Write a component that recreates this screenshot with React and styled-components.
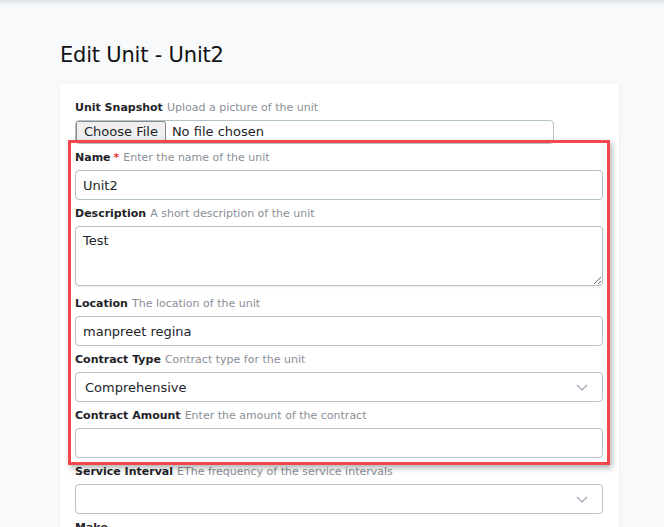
import styled, { createGlobalStyle } from "styled-components";

const GlobalStyle = createGlobalStyle`
  body {
    margin: 0;
    background: #f8f9fb;
    font-family: "DejaVu Sans", "Noto Sans", sans-serif;
    color: #212529;
  }
`;

const TopShade = styled.div`
  height: 5px;
  background: linear-gradient(#dde1e6, #f8f9fb);
`;

const Main = styled.main`
  padding: 36px 45px 0 60px;
`;

const Title = styled.h1`
  margin: 0 0 15px;
  font-family: "DejaVu Sans", sans-serif;
  font-size: 21px;
  font-weight: 400;
  line-height: 28px;
  letter-spacing: -0.2px;
  color: #111;
`;

const Card = styled.section`
  width: 528px;
  background: #fff;
  padding: 16px 16px 20px 15px;
  box-shadow: 0 0 4px rgba(0, 0, 0, 0.05);
`;

const Field = styled.div`
  display: flex;
  flex-direction: column;
  margin-bottom: ${(p) => p.$gap ?? 6}px;
`;

const Label = styled.label`
  font-size: 11px;
  line-height: 15px;
  margin-bottom: 5px;
  font-weight: 700;
  color: #1f2328;
  white-space: nowrap;
`;

const Required = styled.span`
  color: #e53935;
  margin-left: 3px;
`;

const Hint = styled.span`
  font-weight: 400;
  color: #8a8f96;
  margin-left: 4px;
`;

const TextInput = styled.input`
  box-sizing: border-box;
  height: 30px;
  width: 100%;
  border: 1px solid #b3c1ca;
  border-radius: 4px;
  padding: 0 7px;
  font: inherit;
  font-size: 13px;
  color: #212529;
  background: #fff;
`;

const TextArea = styled.textarea`
  display: block;
  box-sizing: border-box;
  height: 60px;
  width: 100%;
  margin-bottom: 4px;
  border: 1px solid #b3c1ca;
  border-radius: 4px;
  padding: 6px 7px;
  font: inherit;
  font-size: 13px;
  color: #212529;
  resize: vertical;
  box-shadow: 0 1px 3px rgba(0, 0, 0, 0.08);
`;

const FileInput = styled.input`
  box-sizing: border-box;
  display: block;
  width: 479px;
  height: 24px;
  border: 1px solid #b3c1ca;
  border-radius: 4px;
  font: inherit;
  font-size: 13px;
  color: #212529;

  &::file-selector-button {
    font: inherit;
    height: 21px;
    margin: 0 6px 0 0;
    padding: 0 7px;
    border: 1px solid #8a8a8a;
    border-radius: 2px;
    background: #efefef;
    color: #212529;
  }
`;

const SelectWrap = styled.div`
  position: relative;
`;

const Select = styled.select`
  box-sizing: border-box;
  appearance: none;
  height: 30px;
  width: 100%;
  border: 1px solid #b3c1ca;
  border-radius: 4px;
  padding: 0 9px;
  font: inherit;
  font-size: 13px;
  color: #212529;
  background: #fff;
`;

const Chevron = styled.svg`
  position: absolute;
  right: 15px;
  top: 12px;
  pointer-events: none;
`;

const Highlight = styled.div`
  position: relative;

  &::after {
    content: "";
    position: absolute;
    inset: -10px -7px -7px -7px;
    border: 3px solid #f2474b;
    box-shadow: 2px 3px 6px rgba(0, 0, 0, 0.3);
    pointer-events: none;
  }
`;

const SelectField = ({ value, options }) => (
  <SelectWrap>
    <Select defaultValue={value}>
      {options.map((o) => (
        <option key={o} value={o}>
          {o}
        </option>
      ))}
    </Select>
    <Chevron width="12" height="7" viewBox="0 0 12 7">
      <path d="M1 1l5 5 5-5" fill="none" stroke="#9aa2ab" strokeWidth="1.2" />
    </Chevron>
  </SelectWrap>
);

export default function App() {
  return (
    <>
      <GlobalStyle />
      <TopShade />
      <Main>
        <Title>Edit Unit - Unit2</Title>
        <Card>
          <Field $gap={6}>
            <Label>
              Unit Snapshot<Hint>Upload a picture of the unit</Hint>
            </Label>
            <FileInput type="file" />
          </Field>

          <Highlight>
            <Field>
              <Label>
                Name<Required>*</Required>
                <Hint>Enter the name of the unit</Hint>
              </Label>
              <TextInput defaultValue="Unit2" />
            </Field>
            <Field>
              <Label>
                Description<Hint>A short description of the unit</Hint>
              </Label>
              <TextArea defaultValue="Test" />
            </Field>
            <Field>
              <Label>
                Location<Hint>The location of the unit</Hint>
              </Label>
              <TextInput defaultValue="manpreet regina" />
            </Field>
            <Field>
              <Label>
                Contract Type<Hint>Contract type for the unit</Hint>
              </Label>
              <SelectField
                value="Comprehensive"
                options={["Comprehensive", "Basic", "Parts Only"]}
              />
            </Field>
            <Field $gap={6}>
              <Label>
                Contract Amount<Hint>Enter the amount of the contract</Hint>
              </Label>
              <TextInput />
            </Field>
          </Highlight>

          <Field>
            <Label>
              Service Interval<Hint>EThe frequency of the service intervals</Hint>
            </Label>
            <SelectField value="" options={["", "Monthly", "Quarterly"]} />
          </Field>
          <Field>
            <Label>Make</Label>
            <TextInput />
          </Field>
        </Card>
      </Main>
    </>
  );
}
